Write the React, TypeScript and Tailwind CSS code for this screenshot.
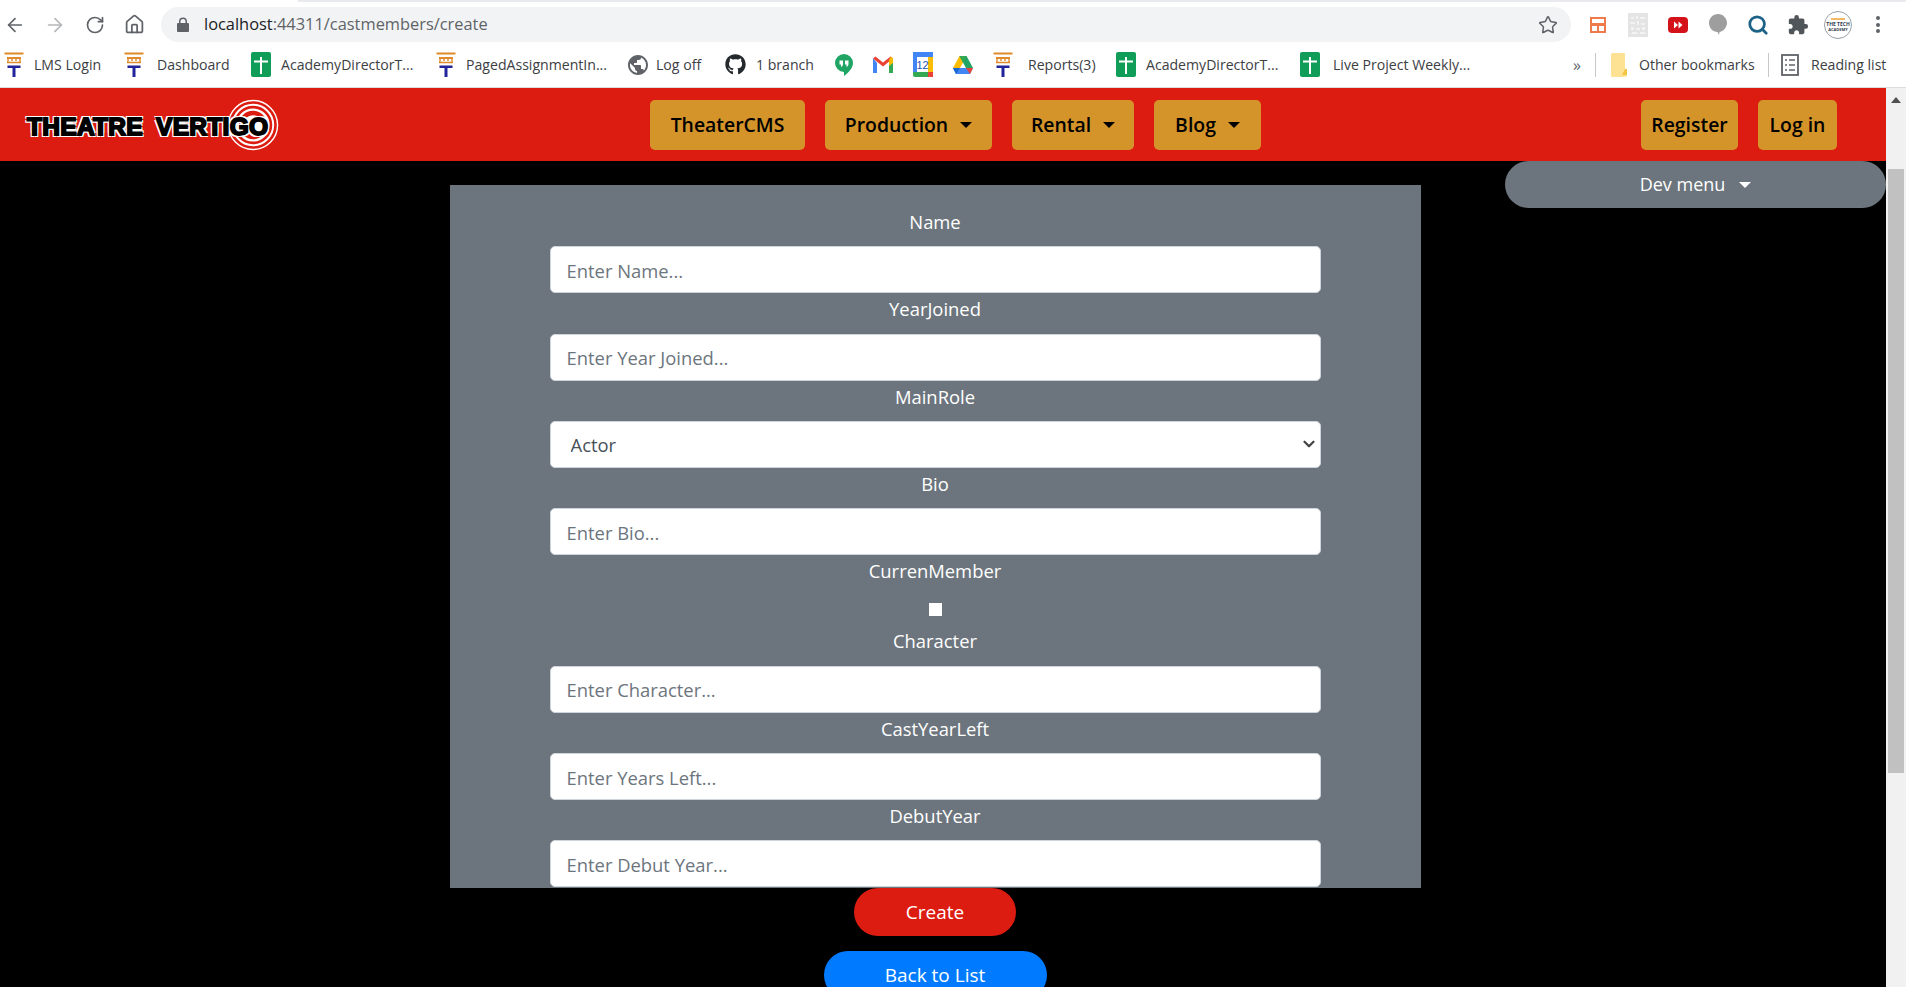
import React from "react";
import { ArrowLeft, ArrowRight, RotateCw, House, Star, Search, ChevronDown } from "lucide-react";
import { FaGithub } from "react-icons/fa";
import { MdPublic, MdExtension } from "react-icons/md";

const TIcon = () => (
  <svg width="20" height="25" viewBox="0 0 20 25" className="shrink-0">
    <path d="M0.5 1.5H19.5M3 6H17" stroke="#e08a2c" strokeWidth="2" fill="none" />
    <path d="M4 6V11M16 6V11M8 6V9M12 6V9M3 10.5H17" stroke="#e08a2c" strokeWidth="1.4" fill="none" />
    <path d="M3.5 13.5H16.5V16H11.5V25H8.5V16H3.5Z" fill="#23239c" />
  </svg>
);

const SheetIcon = () => (
  <svg width="20" height="25" viewBox="0 0 20 25" className="shrink-0">
    <rect x="0" y="0" width="20" height="25" rx="2" fill="#0f9d58" />
    <path d="M3 9.5H17M10 5V22" stroke="#fff" strokeWidth="2" fill="none" />
  </svg>
);

const Hangouts = () => (
  <svg width="18" height="22" viewBox="0 0 18 22" className="shrink-0">
    <path d="M9 0a9 9 0 0 1 9 9c0 5-4.500 9.500-9 13v-4a9 9 0 0 1 0-18Z" fill="#1fa463" />
    <path d="M4.500 6.500h3.500v3.500c0 1.500-1 2.500-2 3v-2.500h-1.500ZM10 6.500h3.500v3.500c0 1.500-1 2.500-2 3v-2.500H10Z" fill="#fff" />
  </svg>
);

const Gmail = () => (
  <svg width="20" height="17" viewBox="0 0 20 17" className="shrink-0">
    <path d="M0 2v15h4V7Z" fill="#4285f4" />
    <path d="M20 2v15h-4V7Z" fill="#34a853" />
    <path d="M0 2.500 2.500 0.500 10 6.500 17.500 0.500 20 2.500 10 10.500Z" fill="#ea4335" />
    <path d="M16 4l2-3.500 2 2V7l-4 3Z" fill="#fbbc04" />
  </svg>
);

const Calendar = () => (
  <svg width="20" height="25" viewBox="0 0 20 25" className="shrink-0">
    <rect width="20" height="25" rx="1.500" fill="#fff" />
    <path d="M0 0h20v5H0Z" fill="#4285f4" />
    <path d="M15 5h5v15h-5Z" fill="#fbbc04" />
    <path d="M0 20h15v5H2a2 2 0 0 1-2-2Z" fill="#34a853" />
    <path d="M0 5h4v15H0Z" fill="#4285f4" />
    <path d="M15 20h5v5h-5Z" fill="#ea4335" />
    <text x="9.500" y="17" textAnchor="middle" fontSize="11" fontFamily="'Liberation Sans', sans-serif" fill="#1a56b8">12</text>
  </svg>
);

const Drive = () => (
  <svg width="20" height="18" viewBox="0 0 20 18" className="shrink-0">
    <path d="M6.500 0h7l-3.500 6.500L7 12H0Z" fill="#fbbc04" />
    <path d="M13.500 0 20 12h-7L6.500 0Z" fill="#1fa463" />
    <path d="M0 12h20l-3 6H3Z" fill="#4285f4" />
    <path d="M6.500 0h7l-3.500 6.500Z" fill="#34a853" />
    <path d="M0 12h7l-4 6Z" fill="#1967d2" />
    <path d="M13 12h7l-3 6Z" fill="#ea4335" />
  </svg>
);

const Folder = () => (
  <svg width="16" height="24" viewBox="0 0 16 24" className="shrink-0">
    <path d="M1.500 0h12.500v18l2 0v4a2 2 0 0 1-2 2H1.500A1.500 1.500 0 0 1 0 22.500V1.500A1.500 1.500 0 0 1 1.500 0Z" fill="#fde293" />
    <path d="M14 16h2v6h-5Z" fill="#f4c543" />
  </svg>
);

const ListIcon = () => (
  <svg width="18" height="22" viewBox="0 0 18 22" className="shrink-0" fill="none" stroke="#5f6368" strokeWidth="1.800">
    <rect x="1" y="1" width="16" height="20" />
    <path d="M4 6h2M8 6h6M4 11h2M8 11h6M4 16h2M8 16h6" strokeWidth="1.500" />
  </svg>
);

const NoiseIcon = () => (
  <svg width="20" height="24" viewBox="0 0 20 24">
    <rect width="20" height="24" fill="#e4e4e4" />
    <path d="M3 4h3v2H3ZM8 3h2v3H8ZM12 4h5v2h-5ZM2 9h5v2H2ZM9 8h2v4H9ZM13 10h4v2h-4ZM3 14h3v3H3ZM8 15h4v2H8ZM14 14h3v3h-3ZM4 19h5v2H4ZM12 19h5v2h-5Z" fill="#f3f3f3" />
  </svg>
);

type BM = { label: string; icon: React.ReactNode; box: string };

const bookmarks: BM[] = [
  { label: "LMS Login", icon: <TIcon />, box: "w-[120px] gap-[10px] pl-[4px]" },
  { label: "Dashboard", icon: <TIcon />, box: "w-[131px] gap-[13px] pl-[4px]" },
  { label: "AcademyDirectorT...", icon: <SheetIcon />, box: "w-[185px] gap-[10px]" },
  { label: "PagedAssignmentIn...", icon: <TIcon />, box: "w-[192px] gap-[10px]" },
  { label: "Log off", icon: <MdPublic size={24} color="#5f6368" className="shrink-0 -ml-[2px] -mr-[4px]" />, box: "w-[97px] gap-[10px]" },
  { label: "1 branch", icon: <FaGithub size={21} color="#24292e" className="shrink-0" />, box: "w-[110px] gap-[10px]" },
  { label: "", icon: <Hangouts />, box: "w-[38px]" },
  { label: "", icon: <Gmail />, box: "w-[40px]" },
  { label: "", icon: <Calendar />, box: "w-[40px]" },
  { label: "", icon: <Drive />, box: "w-[40px]" },
  { label: "Reports(3)", icon: <TIcon />, box: "w-[123px] gap-[15px]" },
  { label: "AcademyDirectorT...", icon: <SheetIcon />, box: "w-[184px] gap-[10px]" },
  { label: "Live Project Weekly...", icon: <SheetIcon />, box: "w-[180px] gap-[13px]" },
];

const fields = [
  { label: "Name", placeholder: "Enter Name..." },
  { label: "YearJoined", placeholder: "Enter Year Joined..." },
  { label: "MainRole", select: true },
  { label: "Bio", placeholder: "Enter Bio..." },
  { label: "CurrenMember", check: true },
  { label: "Character", placeholder: "Enter Character..." },
  { label: "CastYearLeft", placeholder: "Enter Years Left..." },
  { label: "DebutYear", placeholder: "Enter Debut Year..." },
] as { label: string; placeholder?: string; select?: boolean; check?: boolean }[];

const Caret = ({ color }: { color: string }) => (
  <span
    className="ml-[12px] inline-block h-0 w-0 border-x-[6px] border-t-[6px] border-x-transparent align-middle"
    style={{ borderTopColor: color }}
  />
);

const navBtn =
  "flex h-[50px] items-center justify-center rounded-[5px] bg-[#d4942a] text-[19.400px] font-semibold text-black";

const slot = "flex w-[40px] shrink-0 items-center justify-center";

export default function App() {
  return (
    <div className="flex h-screen w-full flex-col overflow-hidden bg-white font-['Open_Sans','Noto_Sans',sans-serif]">
      {/* browser toolbar */}
      <div className="ml-[298px] h-[2px] bg-[#e8eaed]" />
      <div className="flex h-[40px] items-end">
        <div className="flex h-[35px] w-full items-center">
          <div className="flex w-[161px] items-center pl-[4px] text-[#5f6368]">
            <ArrowLeft size={22} strokeWidth={1.8} />
            <ArrowRight size={22} strokeWidth={1.8} className="ml-[18px] text-[#b4b6b9]" />
            <RotateCw size={20} strokeWidth={2} className="ml-[19px]" />
            <House size={21} strokeWidth={2} className="ml-[19px]" />
          </div>
          <div className="flex h-[35px] w-[1410px] shrink-0 items-center rounded-full bg-[#f1f3f4] pl-[16px] pr-[13px] text-[16.400px]">
            <svg width="12" height="15" viewBox="0 0 12 15" className="shrink-0">
              <path d="M2 6V4.500a4 4 0 0 1 8 0V6h1a1 1 0 0 1 1 1v7a1 1 0 0 1-1 1H1a1 1 0 0 1-1-1V7a1 1 0 0 1 1-1Zm1.500 0h5V4.500a2.500 2.500 0 0 0-5 0Z" fill="#5f6368" />
            </svg>
            <span className="ml-[15px] text-[#202124]">localhost</span>
            <span className="text-[#5f6368]">:44311/castmembers/create</span>
            <Star size={20} strokeWidth={1.800} className="ml-auto text-[#5f6368]" />
          </div>
          <div className="flex flex-1 items-center pl-[7px]">
            <div className={slot}>
              <svg width="16" height="16" viewBox="0 0 16 16">
                <rect width="16" height="16" fill="#ee7b4b" />
                <path d="M2 2h12v4H2ZM2 9h5v5H2ZM9 9h5v5H9Z" fill="#fff" />
              </svg>
            </div>
            <div className={slot}>
              <NoiseIcon />
            </div>
            <div className={slot}>
              <svg width="20" height="16" viewBox="0 0 20 16">
                <rect width="20" height="16" rx="4" fill="#d3121a" />
                <path d="M6 4.500l4 3.500-4 3.500ZM10.500 4.500l4 3.500-4 3.500Z" fill="#fff" />
              </svg>
            </div>
            <div className={slot}>
              <svg width="18" height="21" viewBox="0 0 18 21">
                <path d="M9 0c5 0 9 4 9 9s-5 9-7.500 9L10 21 8.500 18C4 18 0 14 0 9S4 0 9 0Z" fill="#9e9e9e" />
              </svg>
            </div>
            <div className={slot}>
              <Search size={22} strokeWidth={3} color="#1c6286" />
            </div>
            <div className={slot}>
              <MdExtension size={22} color="#50555a" />
            </div>
            <div className={slot}>
              <div className="flex h-[28px] w-[28px] flex-col items-center justify-center rounded-full border border-[#9aa0a6] text-[5px] font-bold leading-[6px] text-[#303a4f]">
                <span className="mb-[1px] h-[2px] w-[14px] bg-[#f5b668]" />
                <span className="whitespace-nowrap">THE TECH</span>
                <span className="text-[4px] leading-[5px]">ACADEMY</span>
              </div>
            </div>
            <div className={slot}>
              <div className="flex flex-col gap-[2.500px]">
                <span className="h-[4px] w-[4px] rounded-full bg-[#5f6368]" />
                <span className="h-[4px] w-[4px] rounded-full bg-[#5f6368]" />
                <span className="h-[4px] w-[4px] rounded-full bg-[#5f6368]" />
              </div>
            </div>
          </div>
        </div>
      </div>

      {/* bookmarks bar */}
      <div className="flex h-[46px] items-center border-b border-[#dadce0] text-[14.100px] text-[#3c4043]">
        {bookmarks.map((b, i) => (
          <div key={i} className={`flex items-center ${b.box}`}>
            {b.icon}
            {b.label && <span className="whitespace-nowrap">{b.label}</span>}
          </div>
        ))}
        <span className="ml-[93px] text-[16px] text-[#5f6368]">»</span>
        <span className="ml-[14px] h-[24px] w-px bg-[#c6c8cb]" />
        <div className="ml-[15px] flex w-[157px] items-center gap-[12px]">
          <Folder />
          <span className="whitespace-nowrap">Other bookmarks</span>
        </div>
        <span className="h-[24px] w-px bg-[#c6c8cb]" />
        <div className="ml-[12px] flex items-center gap-[12px]">
          <ListIcon />
          <span className="whitespace-nowrap">Reading list</span>
        </div>
      </div>

      <div className="flex min-h-0 flex-1">
        <div className="flex min-w-0 flex-1 flex-col bg-black">
          {/* site nav */}
          <nav className="relative flex h-[73px] shrink-0 items-center justify-between bg-[#dc1c10] pl-[27px] pr-[49px]">
            <div className="relative flex h-[54px] w-[255px] items-center pt-[6px]">
              <svg width="52" height="52" viewBox="0 0 54 54" className="absolute left-[200px] top-[1px]" fill="none" stroke="#fff">
                <circle cx="27" cy="27" r="25.500" strokeWidth="1.500" />
                <circle cx="27" cy="27" r="21" strokeWidth="2" />
                <circle cx="27" cy="27" r="16" strokeWidth="2.500" />
                <circle cx="27" cy="27" r="9" fill="#fff" strokeWidth="2.500" />
              </svg>
              <span className="relative whitespace-nowrap font-['Liberation_Sans',sans-serif] text-[24.500px] font-bold leading-none tracking-[0.300px] text-black [-webkit-text-stroke:1.800px_black] [text-shadow:2px_2px_0_#fff,-2px_-2px_0_#fff,2px_-2px_0_#fff,-2px_2px_0_#fff] [word-spacing:6px]">
                THEATRE VERTIGO
              </span>
            </div>
            <div className="absolute left-[650px] flex gap-[20px]">
              <a className={`${navBtn} w-[155px]`}>TheaterCMS</a>
              <a className={`${navBtn} w-[167px]`}>
                Production
                <Caret color="#000" />
              </a>
              <a className={`${navBtn} w-[122px]`}>
                Rental
                <Caret color="#000" />
              </a>
              <a className={`${navBtn} w-[107px]`}>
                Blog
                <Caret color="#000" />
              </a>
            </div>
            <div className="flex gap-[20px]">
              <a className={`${navBtn} w-[97px]`}>Register</a>
              <a className={`${navBtn} w-[79px]`}>Log in</a>
            </div>
          </nav>

          {/* page */}
          <main className="relative flex flex-col items-center pr-[16px] pt-[24px] text-[18.400px]">
            <button className="absolute right-0 top-0 flex h-[47px] w-[381px] items-center justify-center rounded-full bg-[#6c757d] text-[18px] text-white">
              Dev menu
              <span className="ml-[14px] h-0 w-0 border-x-[6px] border-t-[6px] border-x-transparent border-t-white" />
            </button>
            <form className="h-[703px] w-[971px] overflow-hidden bg-[#6c757d] px-[100px] pt-[21px] text-center">
              {fields.map((f) => (
                <div key={f.label}>
                  <label className="mb-[12.300px] mt-[4px] block h-[24px] leading-[24px] text-white">{f.label}</label>
                  {f.check ? (
                    <div className="-mt-[12px] flex h-[42px] items-center justify-center pt-[10px]">
                      <input type="checkbox" className="h-[13px] w-[13px] appearance-none bg-white" />
                    </div>
                  ) : f.select ? (
                    <div className="relative">
                      <select className="block h-[47px] w-full appearance-none rounded-[5px] border border-[#ced4da] bg-white pl-[20px] pr-[16px] pt-[1px] text-[#495057]">
                        <option>Actor</option>
                      </select>
                      <ChevronDown size={18} strokeWidth={3} color="#444" className="absolute right-[3px] top-[14px]" />
                    </div>
                  ) : (
                    <input
                      placeholder={f.placeholder}
                      className="block h-[47px] w-full rounded-[5px] border border-[#ced4da] bg-white px-[16px] pt-[1px] placeholder:text-[#6c757d]"
                    />
                  )}
                </div>
              ))}
            </form>
            <button className="h-[48px] w-[162px] shrink-0 rounded-full bg-[#dc1c10] text-[19px] text-white">Create</button>
            <a className="mt-[15px] flex h-[48px] w-[223px] shrink-0 items-center justify-center rounded-full bg-[#007bff] text-[19px] text-white">
              Back to List
            </a>
          </main>
        </div>

        {/* scrollbar */}
        <div className="flex w-[20px] shrink-0 flex-col items-center bg-[#f1f1f1]">
          <span className="mt-[9px] h-0 w-0 border-x-[5px] border-b-[6px] border-x-transparent border-b-[#505050]" />
          <span className="mt-[66px] h-[604px] w-[16px] bg-[#c1c1c1]" />
        </div>
      </div>
    </div>
  );
}
